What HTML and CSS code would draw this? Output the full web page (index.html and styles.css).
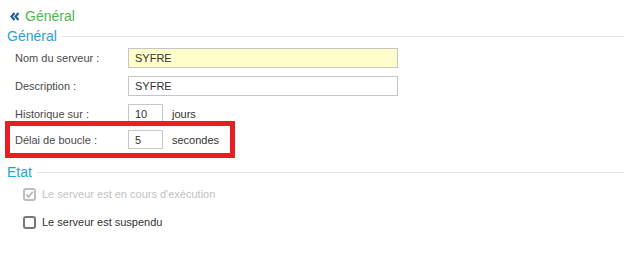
FILE: index.html
```html
<!DOCTYPE html>
<html lang="fr">
<head>
  <meta charset="UTF-8">
  <title>Général</title>
  <link rel="stylesheet" href="styles.css">
</head>
<body>

<div class="crumb">
  <svg class="crumb-arrow" width="10" height="9" viewBox="0 0 10 9"><path d="M4.5 1 L1.5 4.5 L4.5 8 M8.5 1 L5.5 4.5 L8.5 8" fill="none" stroke="#1b5e9e" stroke-width="2.2"/></svg>
  <span>Général</span>
</div>

<div class="section-title"><span>Général</span><span class="rule"></span></div>

<div class="fields">
  <div class="row">
    <label class="lbl" for="nom">Nom du serveur :</label>
    <input class="txt required" id="nom" type="text" value="SYFRE">
  </div>
  <div class="row">
    <label class="lbl" for="desc">Description :</label>
    <input class="txt" id="desc" type="text" value="SYFRE">
  </div>
  <div class="row row-small">
    <label class="lbl" for="histo">Historique sur :</label>
    <input class="num" id="histo" type="text" value="10">
    <span class="unit">jours</span>
  </div>
  <div class="row row-small flagged">
    <label class="lbl" for="delai">Délai de boucle :</label>
    <input class="num" id="delai" type="text" value="5">
    <span class="unit">secondes</span>
  </div>
</div>

<div class="section-title etat"><span>Etat</span><span class="rule"></span></div>

<div class="checks">
  <div class="check disabled">
    <span class="box">
      <svg width="9" height="9" viewBox="0 0 9 9"><path d="M1.2 4.6 L3.6 7 L7.8 1.8" fill="none" stroke="#b5b5b5" stroke-width="1.8"/></svg>
    </span>
    <span>Le serveur est en cours d'exécution</span>
  </div>
  <div class="check">
    <span class="box"></span>
    <span>Le serveur est suspendu</span>
  </div>
</div>

</body>
</html>
```

FILE: styles.css
```css
body {
  margin: 0;
  padding: 8px 0 0 0;
  background-color: #fff;
  font-family: "Liberation Sans", Arial, sans-serif;
  font-size: 11px;
  color: #444;
}

.crumb {
  display: flex;
  align-items: center;
  gap: 5px;
  padding-left: 10px;
  height: 16px;
  font-size: 14px;
  color: #4cb848;
}

.section-title {
  display: flex;
  align-items: center;
  gap: 5px;
  margin-top: 4px;
  padding-left: 7px;
  height: 16px;
  font-size: 14px;
  color: #1fa3d8;
}

.section-title .rule {
  flex: 1;
  height: 1px;
  background-color: #e2e2e2;
}

.section-title.etat {
  margin-top: 15px;
}

.fields {
  margin-top: 4px;
  padding-left: 15px;
}

.row {
  display: flex;
  align-items: center;
  margin-bottom: 8px;
}

.row-small {
  margin-bottom: 7px;
}

.lbl {
  width: 113px;
  color: #4a4a4a;
}

.txt, .num {
  box-sizing: border-box;
  height: 20px;
  padding: 0 6px;
  border: 1px solid #c6c6c6;
  font-family: "Liberation Sans", Arial, sans-serif;
  font-size: 11px;
  color: #333;
  outline: none;
}

.txt {
  width: 270px;
}

.txt.required {
  background-color: #fffdc9;
}

.num {
  width: 35px;
  height: 19px;
}

.unit {
  margin-left: 9px;
  color: #333;
}

.flagged {
  width: fit-content;
  margin-left: -1px;
  padding: 0 7px 0 1px;
  outline: 5px solid #ec1c24;
  outline-offset: 4px;
}

.checks {
  margin-top: 7px;
  padding-left: 23px;
}

.check {
  display: flex;
  align-items: center;
  gap: 6px;
  height: 14px;
  margin-bottom: 14px;
  color: #333;
}

.check .box {
  box-sizing: border-box;
  width: 13px;
  height: 13px;
  border: 2px solid #777;
  border-radius: 3px;
  display: flex;
  align-items: center;
  justify-content: center;
}

.check.disabled {
  color: #c2c2c2;
}

.check.disabled .box {
  border-color: #bdbdbd;
}
```
